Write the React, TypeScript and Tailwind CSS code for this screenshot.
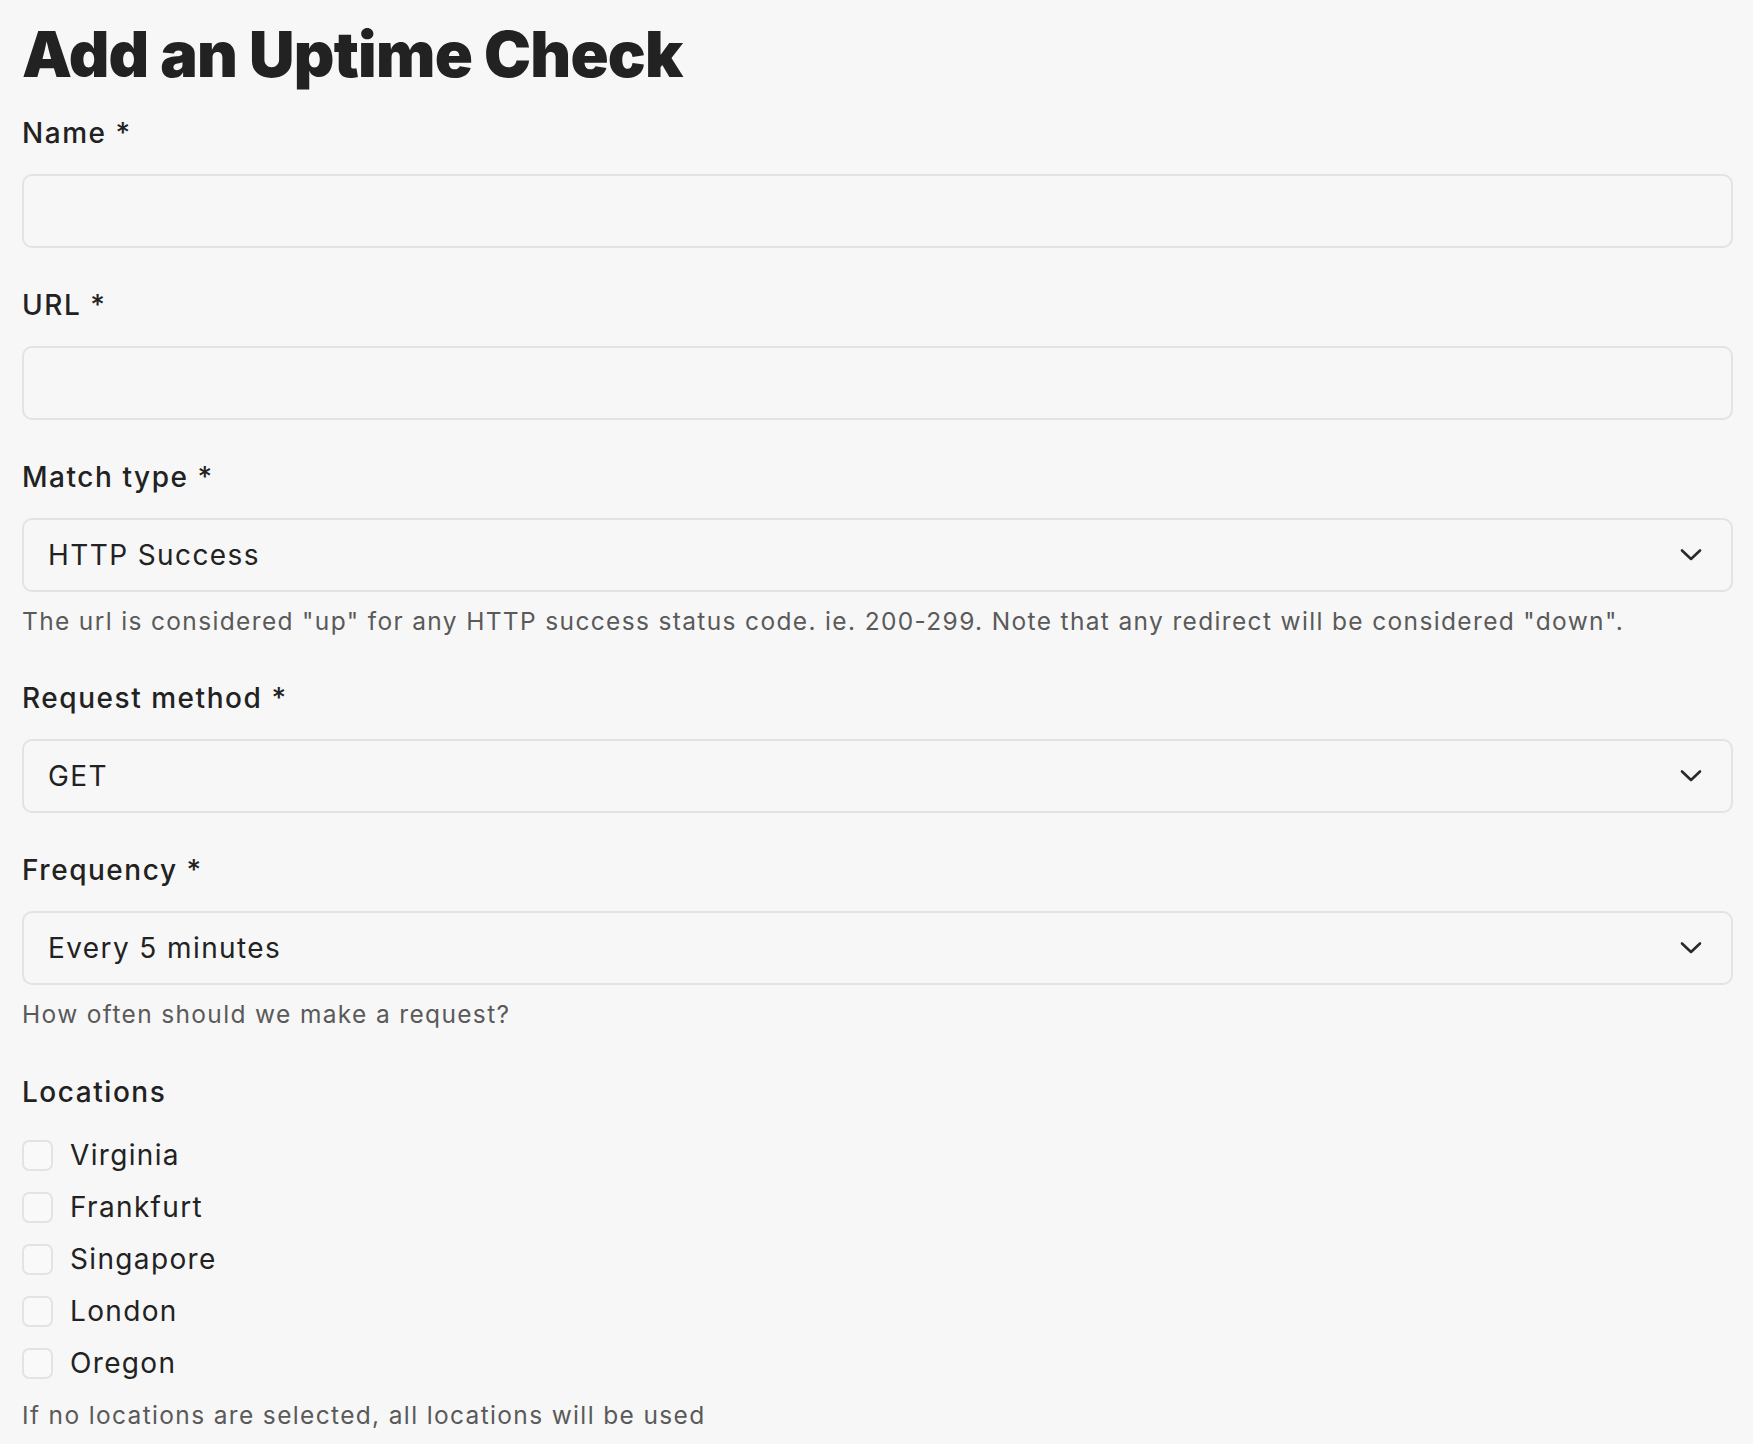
import React from "react";

const Chevron = () => (
  <svg width="22" height="14" viewBox="0 0 22 14" fill="none" className="shrink-0">
    <path d="M2 2.5 L11 11 L20 2.5" stroke="#2a2a2a" strokeWidth="2.6" strokeLinecap="round" strokeLinejoin="round" />
  </svg>
);

const Label = ({ children, className = "" }: { children: React.ReactNode; className?: string }) => (
  <div className={`text-[28px] leading-[42px] font-medium tracking-[0.055em] text-[#222222] ${className}`}>{children}</div>
);

const Help = ({ children, className = "" }: { children: React.ReactNode; className?: string }) => (
  <div className={`text-[24.5px] leading-[35px] tracking-[0.055em] text-[#5a5a5a] ${className}`}>{children}</div>
);

const TextInput = () => (
  <div className="mt-[20px] h-[74px] rounded-[10px] border-2 border-[#e3e3e3] bg-[#f7f7f7]" />
);

const SelectBox = ({ value }: { value: string }) => (
  <div className="mt-[20px] h-[74px] rounded-[10px] border-2 border-[#e3e3e3] bg-[#f7f7f7] flex items-center justify-between pl-[24px] pr-[29px]">
    <span className="text-[28px] tracking-[0.05em] text-[#222222]">{value}</span>
    <Chevron />
  </div>
);

export default function App() {
  const locations = ["Virginia", "Frankfurt", "Singapore", "London", "Oregon"];
  return (
    <div
      className="min-h-[1444px] w-full bg-[#f7f7f7] pl-[22px] pr-[20px] pt-[16px]"
      style={{ fontFamily: "Inter, 'Noto Sans', sans-serif" }}
    >
      <h1 className="text-[63px] leading-[76px] font-black tracking-[-0.012em] text-[#222222]">
        Add an Uptime Check
      </h1>

      <Label className="mt-[20px]">Name *</Label>
      <TextInput />

      <Label className="mt-[36px]">URL *</Label>
      <TextInput />

      <Label className="mt-[36px]">Match type *</Label>
      <SelectBox value="HTTP Success" />
      <Help className="mt-[12px]">
        The url is considered "up" for any HTTP success status code. ie. 200-299. Note that any redirect will be considered "down".
      </Help>

      <Label className="mt-[38px]">Request method *</Label>
      <SelectBox value="GET" />

      <Label className="mt-[36px]">Frequency *</Label>
      <SelectBox value="Every 5 minutes" />
      <Help className="mt-[12px]">How often should we make a request?</Help>

      <Label className="mt-[39px]">Locations</Label>
      <div className="mt-[16px] flex flex-col">
        {locations.map((loc) => (
          <label key={loc} className="h-[52px] flex items-center gap-[17px]">
            <span className="w-[31px] h-[31px] rounded-[7px] border-2 border-[#e3e3e3] bg-[#f9f9f9] shrink-0" />
            <span className="text-[28px] tracking-[0.048em] text-[#222222]">{loc}</span>
          </label>
        ))}
      </div>
      <Help className="mt-[9px]">If no locations are selected, all locations will be used</Help>
    </div>
  );
}
